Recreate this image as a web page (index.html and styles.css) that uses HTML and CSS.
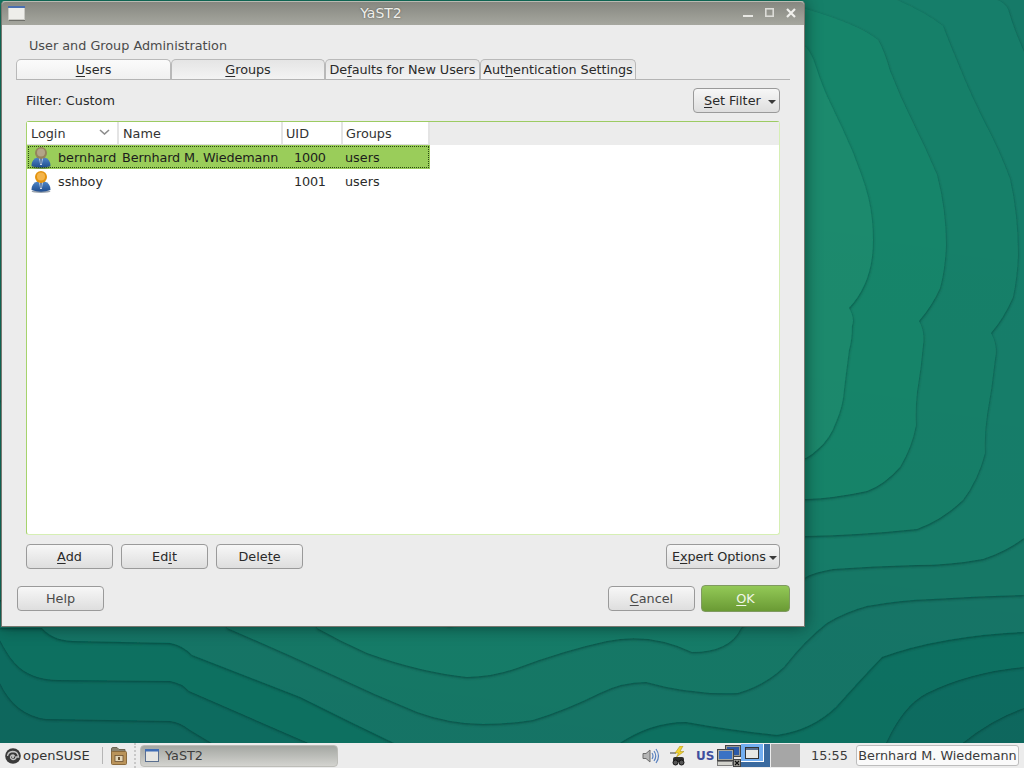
FILE: index.html
```html
<!DOCTYPE html>
<html lang="en">
<head>
<meta charset="utf-8">
<title>YaST2</title>
<link rel="stylesheet" href="styles.css">
</head>
<body>
<div class="desktop">
  <svg class="wallpaper" width="1024" height="743" viewBox="0 0 1024 743" xmlns="http://www.w3.org/2000/svg">
    <defs>
      <filter id="ridge" x="-5%" y="-5%" width="110%" height="110%">
        <feDropShadow dx="0" dy="1" stdDeviation="1.500" flood-color="#053a33" flood-opacity="0.75"/>
      </filter>
      <linearGradient id="shade" x1="0.75" y1="0.2" x2="0.6" y2="1">
        <stop offset="0" stop-color="#000" stop-opacity="0"/>
        <stop offset="1" stop-color="#000" stop-opacity="0.03"/>
      </linearGradient>
    </defs>
    <rect class="c0" width="1024" height="743"/>
    <path class="c1" filter="url(#ridge)" d="M0 683 Q15 715 46 719 L170 721 Q180 722 190 730 L215 745 L960 745 Q990 720 1024 708 L1024 0 L0 0 Z"/>
    <path class="c2" filter="url(#ridge)" d="M0 640 Q10 660 20 668 Q35 680 59 680 L170 681 Q182 683 189 691 L313 745 L885 745 Q903 705 927 693 Q970 672 1024 667 L1024 0 L0 0 Z"/>
    <path class="c3" filter="url(#ridge)" d="M42 628 Q52 640 72 641 L170 643 Q182 645 192 655 L300 697 Q350 722 398 745 L617 745 Q650 722 686 722 Q730 730 777 735 Q812 730 836 707 Q860 680 882 657 Q940 636 1024 632 L1024 0 L0 0 L0 628 Z"/>
    <path class="c4" filter="url(#ridge)" d="M227 628 Q278 650 333 675 Q375 695 417 712 Q450 724 483 724 Q510 724 533 720 Q566 710 600 693 Q622 682 646 682 Q692 695 738 693 Q765 685 784 667 Q805 640 827 623 Q845 612 867 606 Q900 600 933 599 Q980 596 1024 595 L1024 0 L0 0 L0 600 L227 600 Z"/>
    <path class="c5" filter="url(#ridge)" d="M997 0 Q1004 2 1008 9 Q1014 30 1024 52 L1024 538 Q1005 552 983 559 Q950 565 917 565 Q875 566 833 569 Q815 572 806 577 Q770 600 741 628 Q730 652 692 652 Q650 632 607 641 Q565 650 517 668 Q492 677 467 677 Q420 672 367 653 Q342 642 317 628 L317 600 L0 600 L0 0 Z"/>
    <path class="c6" filter="url(#ridge)" d="M897 0 Q925 12 943 26 Q949 42 957 61 Q970 94 987 127 Q1000 152 1010 179 Q1018 215 1018 255 Q1017 278 1013 297 Q1004 318 991 333 Q998 346 995 359 Q992 387 987 415 Q984 435 985 453 Q978 480 963 500 Q942 520 917 529 Q860 535 806 536 Q700 540 600 560 Q520 600 450 626 Q380 600 300 560 L0 400 L0 0 Z"/>
    <path class="c7" filter="url(#ridge)" d="M700 5 L806 9 Q860 25 878 40 Q884 50 890 71 Q900 97 913 123 Q926 149 937 175 Q946 210 946 245 Q945 270 940 288 Q932 306 919 321 Q925 332 923 345 Q921 368 917 392 Q915 410 916 425 Q912 447 900 467 Q884 485 867 491 Q835 498 806 499 L700 499 Z"/>
    <path class="c8" filter="url(#ridge)" d="M700 47 L806 47 Q812 54 816 67 Q820 80 826 94 Q833 109 843 130 Q853 151 861 174 Q870 198 872 220 Q874 241 872 257 Q868 288 849 308 Q855 318 852 326 Q852 340 849 350 Q846 373 844 390 Q843 406 836 422 Q830 439 818 449 Q812 455 806 458 L700 458 Z"/>
    <rect fill="url(#shade)" width="1024" height="743"/>
  </svg>

  <section class="window">
    <header class="titlebar">
      <svg class="win-icon" width="18" height="15" viewBox="0 0 18 15" xmlns="http://www.w3.org/2000/svg">
        <rect x="0.5" y="0.5" width="16" height="13" fill="#eeeeea" stroke="#c9c9c4"/>
        <rect x="0" y="0" width="17" height="2" fill="#4a6fb0"/>
        <rect x="1" y="14" width="16" height="1" fill="#6f706a"/>
      </svg>
      <span class="title-text">YaST2</span>
      <div class="win-controls">
        <svg width="56" height="12" viewBox="0 0 56 12" xmlns="http://www.w3.org/2000/svg">
          <rect x="1" y="8" width="10" height="2" fill="#e8e8e4"/>
          <rect x="23.800" y="1.800" width="7.400" height="7.400" fill="none" stroke="#dcdcd8" stroke-width="1.600"/>
          <path d="M45 2 L53 10 M53 2 L45 10" stroke="#f0f0ec" stroke-width="2.200"/>
        </svg>
      </div>
    </header>
    <div class="win-body">
      <h1 class="heading">User and Group Administration</h1>
      <nav class="tabs">
        <div class="tab tab-users"><span><u>U</u>sers</span></div>
        <div class="tab tab-groups"><span><u>G</u>roups</span></div>
        <div class="tab tab-d">De<u>f</u>aults for New Users</div>
        <div class="tab tab-a">Aut<u>h</u>entication Settings</div>
      </nav>
      <div class="pane">
        <div class="filter-row">
          <span>Filter: Custom</span>
          <button class="btn btn-menu btn-filter"><span><u>S</u>et Filter</span><i class="caret"></i></button>
        </div>
        <div class="table">
          <div class="thead">
            <div class="th th-login">Login<svg class="chev" width="11" height="6" viewBox="0 0 11 6" xmlns="http://www.w3.org/2000/svg"><path d="M1 1 L5.500 5 L10 1" fill="none" stroke="#8d8d8d" stroke-width="1.600"/></svg></div>
            <div class="th th-name">Name</div>
            <div class="th">UID</div>
            <div class="th">Groups</div>
          </div>
          <div class="tr tr-sel">
            <div class="td td-login">
              <svg class="user" width="20" height="23" viewBox="0 0 20 23" xmlns="http://www.w3.org/2000/svg">
                <defs>
                  <linearGradient id="suit" x1="0" y1="0" x2="0" y2="1">
                    <stop offset="0" stop-color="#4f86c8"/>
                    <stop offset="1" stop-color="#1f4c8e"/>
                  </linearGradient>
                </defs>
                <ellipse cx="10" cy="21" rx="9.500" ry="2" fill="#3d5a40" opacity=".45"/>
                <path d="M0.500 20 Q0.500 13 6.500 11.500 L13.500 11.500 Q19.500 13 19.500 20 Q10 23.500 0.500 20 Z" fill="url(#suit)"/>
                <path d="M8 11 L12 11 L10.800 19 L9.200 19 Z" fill="#dfe6ef"/>
                <path d="M9.300 12 L10.700 12 L10.500 18 L9.500 18 Z" fill="#234a86"/>
                <circle cx="10" cy="7" r="6" fill="#94835c"/>
                <circle cx="10" cy="6.500" r="4" fill="#b3a587"/>
              </svg>
              <span>bernhard</span>
            </div>
            <div class="td td-name">Bernhard M. Wiedemann</div>
            <div class="td td-uid">1000</div>
            <div class="td td-grp">users</div>
          </div>
          <div class="tr">
            <div class="td td-login">
              <svg class="user" width="20" height="23" viewBox="0 0 20 23" xmlns="http://www.w3.org/2000/svg">
                <ellipse cx="10" cy="21.500" rx="9.500" ry="1.500" fill="#9aa3ad"/>
                <path d="M0.500 20 Q0.500 13 6.500 11.500 L13.500 11.500 Q19.500 13 19.500 20 Q10 23.500 0.500 20 Z" fill="url(#suit)"/>
                <path d="M8 11 L12 11 L10.800 19 L9.200 19 Z" fill="#e8edf4"/>
                <path d="M9.300 12 L10.700 12 L10.500 18 L9.500 18 Z" fill="#234a86"/>
                <circle cx="10" cy="7" r="6" fill="#e3930f"/>
                <circle cx="10" cy="6.500" r="4" fill="#f4b54a"/>
              </svg>
              <span>sshboy</span>
            </div>
            <div class="td td-name"></div>
            <div class="td td-uid">1001</div>
            <div class="td td-grp">users</div>
          </div>
        </div>
        <div class="action-row">
          <button class="btn btn-std"><u>A</u>dd</button>
          <button class="btn btn-std">Ed<u>i</u>t</button>
          <button class="btn btn-std">Dele<u>t</u>e</button>
          <button class="btn btn-menu btn-expert"><span>E<u>x</u>pert Options</span><i class="caret"></i></button>
        </div>
      </div>
      <div class="dialog-row">
        <button class="btn btn-std btn-soft">Help</button>
        <button class="btn btn-std btn-soft btn-cancel"><u>C</u>ancel</button>
        <button class="btn btn-ok"><u>O</u>K</button>
      </div>
    </div>
  </section>
</div>

<footer class="panel">
  <div class="start">
    <svg width="16" height="16" viewBox="0 0 16 16" xmlns="http://www.w3.org/2000/svg">
      <circle cx="8" cy="8" r="7.800" fill="#3a3a3a"/>
      <path d="M2.500 8 Q3 4 7.500 3.500 Q12 3.500 13 7 L13.500 9 L11 9 Q11 11.500 8 11.500 Q5.500 11 5.500 9 Q6 7 8 7 Q9.500 7.300 9.500 8.500" fill="none" stroke="#c4c4c4" stroke-width="1.300"/>
      <circle cx="8" cy="9" r="1" fill="#e5e5e5"/>
    </svg>
    <span>openSUSE</span>
  </div>
  <div class="sep"></div>
  <svg class="folder" width="16" height="18" viewBox="0 0 16 18" xmlns="http://www.w3.org/2000/svg">
    <path d="M0.500 2 Q0.500 0.500 2 0.500 L6 0.500 L8 2.500 L14 2.500 L14 7 L0.500 7 Z" fill="#8b8371" stroke="#6e6654"/>
    <rect x="0.500" y="4.500" width="15" height="13" rx="1" fill="#b9935a" stroke="#8a6a3c"/>
    <rect x="4" y="8.500" width="8" height="6" fill="#e3d6b8" stroke="#6b5232" stroke-width=".8"/>
    <rect x="7" y="10" width="2" height="3" fill="#6b5232"/>
  </svg>
  <div class="dots"></div>
  <div class="task">
    <svg width="15" height="14" viewBox="0 0 15 14" xmlns="http://www.w3.org/2000/svg">
      <rect x="0.500" y="0.500" width="13" height="12" fill="#e6e6e2" stroke="#5a6f8f"/>
      <rect x="0" y="0" width="14" height="2.500" fill="#3f6db5"/>
    </svg>
    <span>YaST2</span>
  </div>
  <div class="tray">
    <svg class="t-vol" width="18" height="18" viewBox="0 0 18 18" xmlns="http://www.w3.org/2000/svg">
      <path d="M1 6.500 L4 6.500 L8 3 L8 15 L4 11.500 L1 11.500 Z" fill="#b5b5b5" stroke="#6d6d6d"/>
      <path d="M10 6 Q12 9 10 12 M12 4 Q15.500 9 12 14 M14 2 Q19 9 14 16" fill="none" stroke="#5a82c0" stroke-width="1.200"/>
    </svg>
    <svg class="t-plug" width="16" height="20" viewBox="0 0 16 20" xmlns="http://www.w3.org/2000/svg">
      <path d="M0 7 H6" stroke="#777" stroke-width="1.500"/>
      <path d="M10 0 L5 7 L8.500 7 L6.500 11 L14 5.500 L10 5.500 L13 0 Z" fill="#f2d22e" stroke="#a48a10" stroke-width=".5"/>
      <rect x="3" y="11" width="11" height="5" rx="2" fill="#2c2c2c"/>
      <circle cx="5.500" cy="16.500" r="2.500" fill="#555" stroke="#111"/>
      <circle cx="11.500" cy="16.500" r="2.500" fill="#555" stroke="#111"/>
    </svg>
    <span class="t-us">US</span>
    <svg class="t-net" width="24" height="22" viewBox="0 0 24 22" xmlns="http://www.w3.org/2000/svg">
      <rect x="8.500" y="0.500" width="15" height="11" fill="#9a9a92" stroke="#444"/>
      <rect x="10" y="2" width="12" height="8" fill="#2c5aa8"/>
      <rect x="0.500" y="4.500" width="16" height="11" fill="#a8a8a0" stroke="#444"/>
      <rect x="2" y="6" width="13" height="8" fill="#3a72c4"/>
      <rect x="0.500" y="16.500" width="15" height="4" fill="#d2d2cc" stroke="#666" stroke-width=".8"/>
      <rect x="16.500" y="14.500" width="7" height="7" fill="#9a9a94" stroke="#444"/>
      <path d="M18 16 L22 20 M22 16 L18 20" stroke="#111" stroke-width="1.200"/>
    </svg>
    <div class="pager">
      <div class="desk desk-on">
        <div class="desk-inner">
          <svg width="14" height="12" viewBox="0 0 14 12" xmlns="http://www.w3.org/2000/svg">
            <rect x="0.500" y="0.500" width="13" height="11" fill="#e8e8e4" stroke="#333"/>
            <rect x="1" y="1" width="12" height="2" fill="#5a6f8f"/>
          </svg>
        </div>
      </div>
      <div class="desk"></div>
    </div>
    <span class="clock">15:55</span>
    <div class="userbtn">Bernhard M. Wiedemann</div>
  </div>
</footer>
</body>
</html>
```

FILE: styles.css
```css
* { box-sizing: border-box; }
html, body { margin: 0; height: 100%; }
body {
  width: 1024px;
  height: 768px;
  overflow: hidden;
  display: flex;
  flex-direction: column;
  font-family: "DejaVu Sans", sans-serif;
  font-size: 12.8px;
  color: #2a2a2a;
  background: #0e6a60;
}
u { text-underline-offset: 2px; }

.desktop { position: relative; flex: 1; overflow: hidden; }
.wallpaper { position: absolute; left: 0; top: 0; display: block; }
.c0 { fill: #0e6a60; }
.c1 { fill: #0f6e62; }
.c2 { fill: #107364; }
.c3 { fill: #127767; }
.c4 { fill: #137a68; }
.c5 { fill: #167e6a; }
.c6 { fill: #178069; }
.c7 { fill: #19856b; }
.c8 { fill: #1a8a6d; }

.window {
  position: absolute;
  left: 1px;
  top: 1px;
  width: 804px;
  height: 626px;
  display: flex;
  flex-direction: column;
  background: #ececec;
  border: 1px solid #77776f;
  border-top-color: #b9bab2;
  border-radius: 4px 4px 0 0;
  box-shadow: 0 0 16px rgba(0, 30, 25, .6);
}
.titlebar {
  position: relative;
  flex: 0 0 23px;
  display: flex;
  align-items: center;
  justify-content: center;
  background: linear-gradient(#868780, #a6a79f);
  border-radius: 3px 3px 0 0;
}
.win-icon { position: absolute; left: 6px; top: 4px; }
.title-text { color: #efefeb; font-size: 14px; text-shadow: 0 0 2px #55564f; padding: 0 44px 2px 0; }
.win-controls { position: absolute; right: 6px; top: 5px; display: flex; }

.win-body { flex: 1; display: flex; flex-direction: column; min-height: 0; }
.heading {
  margin: 13px 0 0 27px;
  font-size: 12.8px;
  font-weight: 400;
  line-height: 16px;
  color: #4a4a4a;
}
.tabs {
  display: flex;
  height: 21px;
  margin: 5px 14px 0;
  border-bottom: 1px solid #b4b4b4;
}
.tab {
  display: flex;
  align-items: center;
  justify-content: center;
  height: 21px;
  border: 1px solid #b9b9b9;
  border-bottom-color: #b4b4b4;
  border-radius: 5px 5px 0 0;
  background: linear-gradient(#e5e5e5, #f3f3f3);
  white-space: nowrap;
  letter-spacing: -.05px;
}
.tab-users { width: 155px; background: linear-gradient(#fbfbfb, #f0f0f0); }
.tab-groups { width: 154px; }
.tab-d { width: 155px; }
.tab-a { width: 156px; }

.pane { flex: 1; display: flex; flex-direction: column; margin: 8px 24px 0; min-height: 0; }
.filter-row { display: flex; justify-content: space-between; align-items: center; height: 25px; }

.btn {
  font: inherit;
  color: #2a2a2a;
  height: 25px;
  padding: 0;
  border: 1px solid #9a9a9a;
  border-radius: 4px;
  background: linear-gradient(#f7f7f7, #dedede);
  white-space: nowrap;
}
.btn-std { width: 87px; }
.btn-soft { color: #4a4a4a; }
.btn-menu { display: flex; align-items: center; justify-content: space-between; }
.btn-filter { width: 87px; padding: 0 3px 0 10px; }
.btn-expert { width: 114px; margin-left: auto; padding: 0 2px 0 5px; letter-spacing: -.12px; }
.caret {
  display: block;
  width: 0;
  height: 0;
  margin-top: 2px;
  border-left: 4px solid transparent;
  border-right: 4px solid transparent;
  border-top: 4px solid #3a3a3a;
}

.table {
  flex: 1;
  margin-top: 8px;
  min-height: 0;
  background: #fff;
  border: 1px solid #d6efb4;
  border-top-color: #9ccb62;
  border-left-color: #a6d36c;
  border-radius: 3px;
}
.thead {
  display: grid;
  grid-template-columns: 92px 164px 60px 87px;
  height: 23px;
  background: #ececec;
}
.th {
  display: flex;
  align-items: center;
  padding-left: 3px;
  padding-top: 1px;
  background: #fff;
  border-right: 2px solid #e4e4e4;
  border-bottom: 1px solid #dcdcdc;
  color: #333;
  position: relative;
}
.th-login, .th-name { padding-left: 4px; }
.chev { position: absolute; right: 7px; top: 7px; }
.tr {
  display: grid;
  grid-template-columns: 91px 164px 60px 88px;
  width: 403px;
  height: 24px;
  align-items: center;
}
.tr-sel {
  background: #9acd5a;
  outline: 1px dotted #2b4a12;
  outline-offset: -2px;
  color: #1c1c1c;
}
.td { white-space: nowrap; }
.td-login { display: flex; align-items: center; gap: 7px; padding-left: 4px; }
.td-name { padding-left: 4px; letter-spacing: -.1px; }
.td-uid { padding-left: 12px; letter-spacing: -.2px; }
.td-grp { padding-left: 3px; }
.user { flex: none; display: block; }

.action-row { display: flex; gap: 8px; margin-top: 9px; }
.dialog-row {
  display: flex;
  align-items: center;
  height: 27px;
  margin: 16px 14px 14px 15px;
}
.btn-cancel { margin-left: auto; }
.btn-ok {
  width: 89px;
  height: 27px;
  margin-left: 6px;
  color: #f0f6e6;
  background: linear-gradient(#93c957, #6a9a34);
  border-color: #7f9a60;
}

.panel {
  flex: 0 0 25px;
  display: flex;
  align-items: center;
  background: #ececec;
  padding-left: 5px;
  color: #333;
}
.start { display: flex; align-items: center; gap: 2px; width: 86px; }
.start span { font-size: 13px; }
.sep { width: 1px; height: 17px; margin-left: 11px; background: #b5b5b5; }
.folder { margin-left: 8px; }
.dots { width: 2px; height: 25px; margin-left: 7px; border-left: 2px dotted #c8c8c8; }
.task {
  display: flex;
  align-items: center;
  gap: 5px;
  width: 198px;
  height: 22px;
  margin-left: 4px;
  padding-left: 4px;
  border: 1px solid #bdbdb8;
  border-radius: 4px;
  background: linear-gradient(#a4a7a2, #d3d3cf);
  color: #3d3d3d;
}
.tray { margin-left: auto; display: flex; align-items: center; }
.t-vol { margin-right: 10px; }
.t-plug { margin-right: 10px; }
.t-us { width: 21px; font-weight: 700; font-size: 12px; color: #3f4f9e; }
.pager { display: flex; gap: 1px; height: 23px; align-self: flex-end; }
.desk { width: 29px; background: #a6a6a6; }
.desk-on { background: #3a6a9f; }
.desk-inner {
  display: flex;
  align-items: center;
  justify-content: center;
  width: 23px;
  height: 18px;
  background: #72aef0;
  border-right: 1px solid #fff;
  border-bottom: 1px solid #fff;
}
.clock { width: 35px; margin-left: 11px; color: #3a3a3a; white-space: nowrap; }
.userbtn {
  width: 163px;
  height: 21px;
  margin: 0 5px 0 10px;
  display: flex;
  align-items: center;
  justify-content: center;
  background: #fafafa;
  border: 1px solid #bdbdbd;
  border-radius: 3px;
  color: #3a3a3a;
}
```
